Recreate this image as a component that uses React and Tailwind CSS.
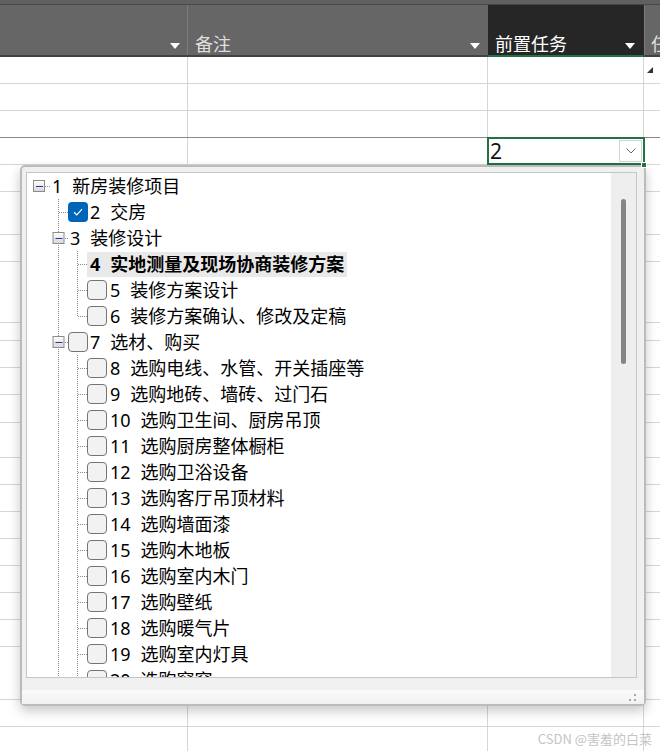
import React from "react";

const tree = [
  { n: 1, t: "新房装修项目", lvl: 0, box: true },
  { n: 2, t: "交房", lvl: 1, check: "on" },
  { n: 3, t: "装修设计", lvl: 1, box: true },
  { n: 4, t: "实地测量及现场协商装修方案", lvl: 2, bold: true },
  { n: 5, t: "装修方案设计", lvl: 2, check: "off" },
  { n: 6, t: "装修方案确认、修改及定稿", lvl: 2, check: "off", last: true },
  { n: 7, t: "选材、购买", lvl: 1, box: true, check: "off" },
  { n: 8, t: "选购电线、水管、开关插座等", lvl: 2, check: "off" },
  { n: 9, t: "选购地砖、墙砖、过门石", lvl: 2, check: "off" },
  { n: 10, t: "选购卫生间、厨房吊顶", lvl: 2, check: "off" },
  { n: 11, t: "选购厨房整体橱柜", lvl: 2, check: "off" },
  { n: 12, t: "选购卫浴设备", lvl: 2, check: "off" },
  { n: 13, t: "选购客厅吊顶材料", lvl: 2, check: "off" },
  { n: 14, t: "选购墙面漆", lvl: 2, check: "off" },
  { n: 15, t: "选购木地板", lvl: 2, check: "off" },
  { n: 16, t: "选购室内木门", lvl: 2, check: "off" },
  { n: 17, t: "选购壁纸", lvl: 2, check: "off" },
  { n: 18, t: "选购暖气片", lvl: 2, check: "off" },
  { n: 19, t: "选购室内灯具", lvl: 2, check: "off" },
  { n: 20, t: "选购窗帘", lvl: 2, check: "off" },
  { n: 21, t: "选购家具", lvl: 2, check: "off" },
];

// heights of the sheet rows hidden behind the popup
const lowerRows = [27, 43, 27, 61, 18, 27, 27, 28, 35, 27, 27, 27, 27, 27, 27, 27, 53, 27, 30];

const DOT = "#8a8a8a";

function MinusBox({ cx }) {
  return (
    <g>
      <defs>
        <linearGradient id={`mb${cx}`} x1="0" y1="0" x2="0" y2="1">
          <stop offset="0" stopColor="#ffffff" />
          <stop offset="1" stopColor="#d6d6d6" />
        </linearGradient>
      </defs>
      <rect x={cx - 5.5} y={7.5} width={11} height={11} fill={`url(#mb${cx})`} stroke="#8c8c8c" />
      <line x1={cx - 3} y1={13.5} x2={cx + 4} y2={13.5} stroke="#23399a" />
    </g>
  );
}

function Connectors({ row }) {
  const dash = { stroke: DOT, strokeDasharray: "1 1", strokeWidth: 1 };
  if (row.lvl === 0) {
    return (
      <svg width="25" height="26" className="shrink-0">
        <line x1="18" y1="13.5" x2="24" y2="13.5" {...dash} />
        <MinusBox cx={12} />
      </svg>
    );
  }
  if (row.lvl === 1) {
    return (
      <svg width="41" height="26" className="shrink-0">
        <line x1="31.5" y1="0" x2="31.5" y2="26" {...dash} />
        <line x1={row.box ? 38 : 32} y1="13.5" x2="41" y2="13.5" {...dash} />
        {row.box && <MinusBox cx={31.5} />}
      </svg>
    );
  }
  return (
    <svg width="60" height="26" className="shrink-0">
      <line x1="31.5" y1="0" x2="31.5" y2="26" {...dash} />
      <line x1="50.5" y1="0" x2="50.5" y2={row.last ? 14 : 26} {...dash} />
      <line x1="51" y1="13.5" x2="60" y2="13.5" {...dash} />
    </svg>
  );
}

function CheckBox({ on }) {
  if (on) {
    return (
      <div className="w-[20px] h-[20px] shrink-0 rounded-[4px] bg-[#0064b8] flex items-center justify-center">
        <svg width="14" height="14" viewBox="0 0 14 14">
          <path d="M3 7.3 L5.8 10 L11 4.2" fill="none" stroke="#fff" strokeWidth="1.2" />
        </svg>
      </div>
    );
  }
  return <div className="w-[20px] h-[20px] shrink-0 rounded-[4px] border border-[#747474] bg-[#f2f2f2]" />;
}

function TreeRow({ row }) {
  const label = (
    <>
      <span>{row.n}</span>
      <span className="ml-[10px]">{row.t}</span>
    </>
  );
  return (
    <div className="h-[26px] flex items-center whitespace-nowrap">
      <Connectors row={row} />
      {row.check && <CheckBox on={row.check === "on"} />}
      {row.bold ? (
        <div className="h-[25px] flex items-center bg-[#e9e9e9] pl-[3px] pr-[3px] font-bold">{label}</div>
      ) : (
        <div className={row.lvl === 0 ? "ml-0" : row.lvl === 1 ? "ml-[2px]" : "ml-[3px]"}>{label}</div>
      )}
    </div>
  );
}

function Arrow({ className }) {
  return (
    <svg width="10" height="6" viewBox="0 0 10 6" className={className}>
      <path d="M0 0 H10 L5 6 Z" fill="#ffffff" />
    </svg>
  );
}

function SheetRow({ h, dark, children }) {
  return (
    <div
      className={`flex ${dark ? "border-b border-[#8a8a8a]" : "border-b border-[#d6d6d6]"}`}
      style={{ height: h }}
    >
      <div className="w-[188px] border-r border-[#d6d6d6]" />
      <div className="w-[300px] border-r border-[#d6d6d6]" />
      <div className="w-[156px] border-r border-[#d6d6d6] relative">{children}</div>
      <div className="flex-1" />
    </div>
  );
}

export default function App() {
  return (
    <div className="relative w-[660px] h-[751px] overflow-hidden bg-white text-black font-['Noto_Sans','Noto_Sans_CJK_SC',sans-serif]">
      {/* header */}
      <div className="h-[57px] flex flex-col bg-[#666666]">
        <div className="h-[4px] bg-[#606060]" />
        <div className="h-[1px] bg-[#474747]" />
        <div className="flex h-[50px]">
          <div className="w-[188px] border-r border-[#7b7b7b] flex justify-end items-end pr-[7px] pb-[6px]">
            <Arrow />
          </div>
          <div className="w-[300px] flex justify-between items-end pl-[7px] pr-[8px]">
            <span className="text-[18px] leading-[24px] text-[#dedede] font-['Noto_Sans_CJK_SC',sans-serif]">备注</span>
            <Arrow className="mb-[6px]" />
          </div>
          <div className="w-[156px] bg-[#262626] flex justify-between items-end pl-[7px] pr-[9px]">
            <span className="text-[18px] leading-[24px] text-white font-['Noto_Sans_CJK_SC',sans-serif]">前置任务</span>
            <Arrow className="mb-[6px]" />
          </div>
          <div className="flex-1 border-l border-[#7b7b7b] flex items-end pl-[6px] overflow-hidden">
            <span className="text-[18px] leading-[24px] text-[#dedede] whitespace-nowrap font-['Noto_Sans_CJK_SC',sans-serif]">任务</span>
          </div>
        </div>
        <div className="h-[2px] flex bg-[#424242]">
          <div className="w-[488px]" />
          <div className="w-[156px] bg-[#217346]" />
        </div>
      </div>

      {/* sheet body */}
      <SheetRow h={27}>
        <svg width="6" height="6" className="absolute left-[159px] top-[10px]">
          <path d="M6 0 V6 H0 Z" fill="#333" />
        </svg>
      </SheetRow>
      <SheetRow h={27} />
      <SheetRow h={27} dark />
      <SheetRow h={27}>
        <div className="absolute -left-[1px] -top-[1px] -right-[2px] -bottom-[1px] border-2 border-[#217346] flex items-center justify-between pl-[1px] pr-[1px]">
          <span className="text-[21px] leading-[24px] text-[#111]">2</span>
          <div className="w-[23px] h-[22px] border border-[#d4d4d4] bg-white flex items-center justify-center">
            <svg width="10" height="6" viewBox="0 0 10 6">
              <path d="M0.5 0.5 L5 5 L9.5 0.5" fill="none" stroke="#6a6a6a" strokeWidth="1" />
            </svg>
          </div>
        </div>
      </SheetRow>
      {lowerRows.map((h, i) => (
        <SheetRow key={i} h={h} />
      ))}

      {/* fill handle */}
      <div className="absolute left-[641px] top-[162px] w-[6px] h-[6px] bg-[#217346] border border-white z-20" />

      {/* dropdown tree popup */}
      <div className="absolute left-[20px] top-[165px] w-[626px] h-[541px] z-10 rounded-[5px] border-2 border-[#bdbbb9] bg-[#f0f0f0] shadow-[0_5px_12px_rgba(0,0,0,0.22)] flex flex-col">
        <div className="h-[5px]" />
        <div className="ml-[4px] w-[611px] h-[506px] border border-[#c6c6c6] bg-white flex overflow-hidden">
          <div className="flex-1 overflow-hidden text-[18px] leading-[26px]">
            {tree.map((r) => (
              <TreeRow key={r.n} row={r} />
            ))}
          </div>
          <div className="w-[25px] bg-[#eeeeee] pt-[26px] flex justify-center">
            <div className="w-[5px] h-[165px] rounded-full bg-[#858585]" />
          </div>
        </div>
        <div className="h-[12px]" />
        <div className="flex-1 bg-gradient-to-b from-[#fbfbfb] to-[#f1f1f1] flex justify-end items-end pr-[7px] pb-[2px]">
          <svg width="8" height="8" viewBox="0 0 8 8">
            <rect x="5" y="0" width="2" height="2" fill="#a8a8a8" />
            <rect x="0" y="5" width="2" height="2" fill="#a8a8a8" />
            <rect x="5" y="5" width="2" height="2" fill="#a8a8a8" />
          </svg>
        </div>
      </div>

      {/* watermark */}
      <div className="absolute right-[8px] bottom-[5px] text-[13px] leading-[15px] text-[#c4c4c4] z-20 font-['Noto_Sans_CJK_SC',sans-serif]">
        CSDN @害羞的白菜
      </div>
    </div>
  );
}
